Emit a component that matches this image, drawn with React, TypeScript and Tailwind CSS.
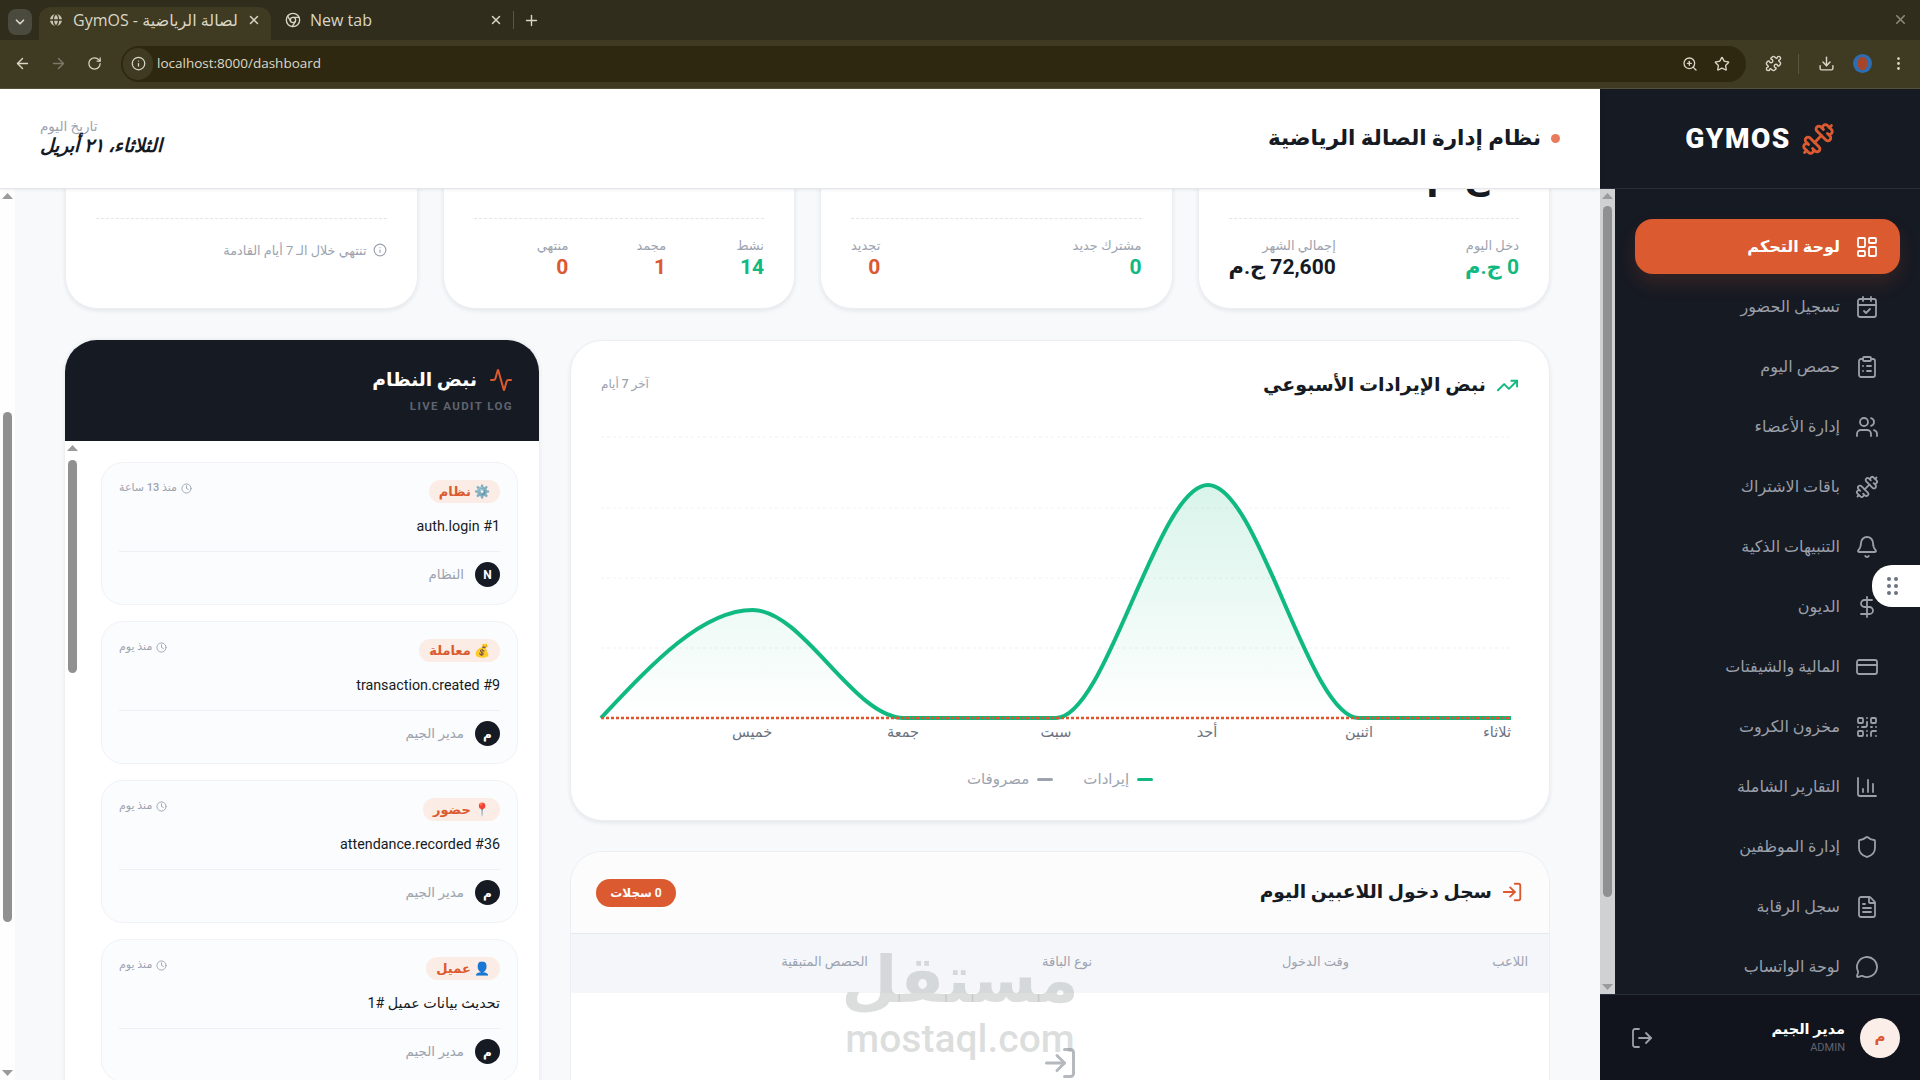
import {
  Activity,
  ArrowLeft,
  ArrowRight,
  Bell,
  CalendarCheck,
  ChartColumn,
  ChevronDown,
  Chrome,
  ClipboardList,
  Clock,
  CreditCard,
  DollarSign,
  Download,
  Dumbbell,
  EllipsisVertical,
  FileText,
  Globe,
  Info,
  LayoutDashboard,
  LogIn,
  LogOut,
  MessageCircle,
  Plus,
  Puzzle,
  QrCode,
  RotateCw,
  Shield,
  Star,
  TrendingUp,
  Users,
  X,
  ZoomIn,
} from 'lucide-react'
import clsx from 'clsx'

const NAV = [
  { label: 'لوحة التحكم', icon: LayoutDashboard, active: true },
  { label: 'تسجيل الحضور', icon: CalendarCheck },
  { label: 'حصص اليوم', icon: ClipboardList },
  { label: 'إدارة الأعضاء', icon: Users },
  { label: 'باقات الاشتراك', icon: Dumbbell },
  { label: 'التنبيهات الذكية', icon: Bell },
  { label: 'الديون', icon: DollarSign },
  { label: 'المالية والشيفتات', icon: CreditCard },
  { label: 'مخزون الكروت', icon: QrCode },
  { label: 'التقارير الشاملة', icon: ChartColumn },
  { label: 'إدارة الموظفين', icon: Shield },
  { label: 'سجل الرقابة', icon: FileText },
  { label: 'لوحة الواتساب', icon: MessageCircle },
]

const LOGS = [
  { tag: '⚙️ نظام', time: 'منذ 13 ساعة', text: 'auth.login #1', who: 'النظام', initial: 'N' },
  { tag: '💰 معاملة', time: 'منذ يوم', text: 'transaction.created #9', who: 'مدير الجيم', initial: 'م' },
  { tag: '📍 حضور', time: 'منذ يوم', text: 'attendance.recorded #36', who: 'مدير الجيم', initial: 'م' },
  { tag: '👤 عميل', time: 'منذ يوم', text: 'تحديث بيانات عميل #1', who: 'مدير الجيم', initial: 'م' },
]

const DAYS = [
  { label: 'خميس', x: 153 },
  { label: 'جمعة', x: 304 },
  { label: 'سبت', x: 457 },
  { label: 'أحد', x: 608 },
  { label: 'اثنين', x: 760 },
  { label: 'ثلاثاء', x: 898 },
]

function FakeScrollbar({ thumbTop, thumbHeight, className }: { thumbTop: number; thumbHeight: number; className?: string }) {
  return (
    <div className={clsx('relative w-[15px] shrink-0 bg-white/80', className)}>
      <svg className="absolute left-[2px] top-[4px]" width="11" height="6" viewBox="0 0 11 6">
        <polygon points="5.5,0 11,6 0,6" fill="#9b9b9b" />
      </svg>
      <div
        className="absolute left-[3px] w-[9px] rounded-full bg-[#8f908f]"
        style={{ top: thumbTop, height: thumbHeight }}
      />
      <svg className="absolute bottom-[4px] left-[2px]" width="11" height="6" viewBox="0 0 11 6">
        <polygon points="0,0 11,0 5.5,6" fill="#9b9b9b" />
      </svg>
    </div>
  )
}

function BrowserChrome() {
  return (
    <div dir="ltr" className="h-[89px] shrink-0 bg-[#302d1c] font-['Open_Sans',sans-serif] text-[#d9d6c6]">
      <div className="flex h-[40px] items-end">
        <div className="mb-[5px] ml-[8px] flex h-[26px] w-[24px] items-center justify-center rounded-lg bg-[#4a4a3f]">
          <ChevronDown size={14} strokeWidth={3} />
        </div>
        <div className="ml-[7px] flex h-[33px] w-[232px] items-center rounded-t-xl bg-[#3f3a22] pb-[7px] pl-[9px] pr-[10px] text-[16px]">
          <Globe size={16} className="shrink-0 fill-[#c8c5b4] text-[#3f3a22]" />
          <span className="ml-[9px] w-[165px] overflow-hidden whitespace-nowrap font-['Open_Sans','DejaVu_Sans',sans-serif]">
            GymOS - الصالة الرياضية
          </span>
          <X size={14} className="ml-auto" strokeWidth={2.5} />
        </div>
        <div className="ml-[10px] flex h-[33px] w-[232px] items-center pb-[7px] pl-[4px] pr-[10px] text-[16px]">
          <Chrome size={16} className="shrink-0" />
          <span className="ml-[9px]">New tab</span>
          <X size={14} className="ml-auto" strokeWidth={2.5} />
        </div>
        <div className="mb-[11px] h-[18px] w-px bg-[#5a5642]" />
        <Plus size={17} className="mb-[11px] ml-[9px]" />
        <X size={15} className="mb-[13px] ml-auto mr-[12px] text-[#8d8a7c]" strokeWidth={2.5} />
      </div>
      <div className="flex h-[49px] items-center border-b border-[#55503a] bg-[#3f3a22] pb-[1px]">
        <ArrowLeft size={17} className="ml-[14px]" />
        <ArrowRight size={17} className="ml-[19px] text-[#7d7868]" />
        <RotateCw size={15} className="ml-[20px]" />
        <div className="ml-[19px] flex h-[36px] w-[1625px] items-center rounded-full bg-[#2e2810] pr-[16px]">
          <div className="ml-[2px] flex h-[32px] w-[30px] items-center justify-center rounded-full bg-[#3f3a22]">
            <Info size={15} />
          </div>
          <span className="ml-[4px] text-[13.5px] text-[#dcd9c9]">localhost:8000/dashboard</span>
          <ZoomIn size={16} className="ml-auto" />
          <Star size={16} className="ml-[16px]" />
        </div>
        <Puzzle size={17} className="ml-[19px]" />
        <div className="ml-[16px] h-[20px] w-px bg-[#5a5642]" />
        <Download size={17} className="ml-[19px]" />
        <div className="ml-[18px] flex h-[19px] w-[19px] items-center justify-center rounded-full bg-[#2e6db0]">
          <div className="h-[13px] w-[9px] rounded-full bg-[#a8442a]" />
        </div>
        <EllipsisVertical size={17} className="ml-[18px]" />
      </div>
    </div>
  )
}

function Sidebar() {
  return (
    <aside className="flex w-[320px] shrink-0 flex-col bg-[#161a23]">
      <div className="flex h-[100px] shrink-0 items-center justify-center gap-[10px] border-b border-[#2a2e3a]">
        <Dumbbell size={34} className="text-[#db5a2f]" />
        <span dir="ltr" className="text-[28px] font-black tracking-[1.5px] text-white">
          GYMOS
        </span>
      </div>
      <div className="flex min-h-0 flex-1">
        <nav className="flex flex-1 flex-col gap-[5px] px-[20px] pt-[30px]">
          {NAV.map((item) => (
            <div
              key={item.label}
              className={clsx(
                'flex h-[55px] shrink-0 items-center gap-[15px] rounded-[18px] pr-[21px] text-[16px]',
                item.active
                  ? 'bg-[#db5a2f] font-bold text-white shadow-[0_10px_18px_rgba(219,90,47,0.15)]'
                  : 'text-[#9a9fa9]',
              )}
            >
              <item.icon size={24} strokeWidth={1.8} className="shrink-0" />
              <span>{item.label}</span>
            </div>
          ))}
        </nav>
        <FakeScrollbar thumbTop={17} thumbHeight={691} className="order-last" />
      </div>
      <div className="flex h-[86px] shrink-0 items-center border-t border-[#2a2e3a] bg-[#11141c] pl-[30px] pr-[20px]">
        <div className="flex h-[40px] w-[40px] items-center justify-center rounded-full bg-[#fbeee9] text-[15px] font-bold text-[#db5a2f]">
          م
        </div>
        <div className="mr-[15px] flex flex-col">
          <span className="text-[14.5px] font-bold leading-[20px] text-white">مدير الجيم</span>
          <span className="text-[11px] leading-[16px] text-[#5f6470]">ADMIN</span>
        </div>
        <LogOut size={24} strokeWidth={1.8} className="mr-auto text-[#9a9fa9]" />
      </div>
    </aside>
  )
}

function StatCard({ value, children }: { value: React.ReactNode; children: React.ReactNode }) {
  return (
    <div className="flex h-[249px] flex-col justify-end rounded-[32px] border border-[#eceef3] bg-white px-[30px] pb-[28px] shadow-[0_2px_4px_rgba(20,25,40,0.08)]">
      {value}
      <div className="mb-[19px] border-t border-dashed border-[#e3e5ea]" />
      {children}
    </div>
  )
}

function BigValue({ children }: { children: React.ReactNode }) {
  return <div className="mb-[22px] text-[36px] font-bold leading-[40px] text-[#161a23]">{children}</div>
}

function StatCol({ label, value, color }: { label: string; value: string; color: string }) {
  return (
    <div>
      <div className="text-[13px] leading-[16px] text-[#9ca3af]">{label}</div>
      <div className={clsx('text-[21px] font-bold leading-[26px]', color)}>{value}</div>
    </div>
  )
}

function StatCards() {
  return (
    <div className="-mt-[129px] mb-[31px] grid grid-cols-4 gap-[25px]">
      <StatCard value={<BigValue>0 ج.م</BigValue>}>
        <div className="flex justify-between">
          <StatCol label="دخل اليوم" value="0 ج.م" color="text-[#10b981]" />
          <StatCol label="إجمالي الشهر" value="72,600 ج.م" color="text-[#161a23]" />
        </div>
      </StatCard>
      <StatCard
        value={
          <BigValue>
            0 <span className="text-[18px] text-[#9ca3af]">جديد</span>
          </BigValue>
        }
      >
        <div className="flex justify-between">
          <StatCol label="مشترك جديد" value="0" color="text-[#10b981]" />
          <StatCol label="تجديد" value="0" color="text-[#db5a2f]" />
        </div>
      </StatCard>
      <StatCard value={<BigValue>14</BigValue>}>
        <div className="grid grid-cols-3 gap-[3px]">
          <StatCol label="نشط" value="14" color="text-[#10b981]" />
          <StatCol label="مجمد" value="1" color="text-[#db5a2f]" />
          <StatCol label="منتهي" value="0" color="text-[#db5a2f]" />
        </div>
      </StatCard>
      <StatCard value={<BigValue>0</BigValue>}>
        <div className="flex h-[42px] items-start gap-[6px] pt-[3px] text-[12.8px] text-[#9ca3af]">
          <Info size={14} className="mt-[2px] shrink-0" />
          <span>تنتهي خلال الـ 7 أيام القادمة</span>
        </div>
      </StatCard>
    </div>
  )
}

function RevenueChart() {
  const line =
    'M2 297 C52.6 243 103 189 153.7 189 C204.3 189 254.6 297 305 297 L457 297 C507.5 297 558.5 64 609 64 C659.5 64 709.7 297 760 297 L912 297'
  return (
    <svg width="920" height="330" className="block">
      <defs>
        <linearGradient id="rev" x1="0" y1="0" x2="0" y2="1">
          <stop offset="0%" stopColor="#10b981" stopOpacity="0.16" />
          <stop offset="100%" stopColor="#10b981" stopOpacity="0" />
        </linearGradient>
      </defs>
      {[16, 87, 157, 227].map((y) => (
        <line key={y} x1="2" x2="912" y1={y} y2={y} stroke="#eff1f4" strokeDasharray="3 3" />
      ))}
      <path d={`${line} V297 H2 Z`} fill="url(#rev)" />
      <path d={line} fill="none" stroke="#10b981" strokeWidth="4" />
      <line x1="2" x2="912" y1="297" y2="297" stroke="#e0532b" strokeWidth="2.5" strokeDasharray="3 2" />
      {DAYS.map((d) => (
        <text key={d.label} x={d.x} y="316" textAnchor="middle" fontSize="14.5" fill="#6b7280">
          {d.label}
        </text>
      ))}
    </svg>
  )
}

function ChartCard() {
  return (
    <section className="h-[481px] rounded-[32px] border border-[#eceef3] bg-white px-[30px] pt-[30px] shadow-[0_2px_4px_rgba(20,25,40,0.08)]">
      <div className="flex h-[50px] items-start justify-between">
        <div className="flex items-center gap-[10px]">
          <TrendingUp size={23} className="text-[#10b981]" />
          <h2 className="text-[19px] font-bold leading-[28px] text-[#161a23]">نبض الإيرادات الأسبوعي</h2>
        </div>
        <span className="mt-[4px] text-[12px] font-medium text-[#9ca3af]">آخر 7 أيام</span>
      </div>
      <RevenueChart />
      <div className="mt-[17px] flex justify-center gap-[30px] text-[15px] text-[#9ca3af]">
        <span className="flex items-center gap-[8px]">
          <span className="h-[3px] w-[16px] rounded-full bg-[#10b981]" />
          إيرادات
        </span>
        <span className="flex items-center gap-[8px]">
          <span className="h-[3px] w-[16px] rounded-full bg-[#9ca3af]" />
          مصروفات
        </span>
      </div>
    </section>
  )
}

function AttendanceTable() {
  return (
    <section className="rounded-t-[32px] border border-[#eceef3] bg-white">
      <div className="flex h-[81px] items-center justify-between rounded-t-[32px] bg-[#fcfcfd] pl-[25px] pr-[26px]">
        <div className="flex items-center gap-[9px]">
          <LogIn size={22} className="text-[#db5a2f]" />
          <h2 className="text-[18.7px] font-bold text-[#161a23]">سجل دخول اللاعبين اليوم</h2>
        </div>
        <span className="flex h-[28px] w-[80px] items-center justify-center rounded-full bg-[#db5a2f] text-[12px] font-bold text-white">
          0 سجلات
        </span>
      </div>
      <div className="flex h-[60px] items-center border-t border-[#e6e8f0] bg-[#f5f6fa] px-[21px] pb-[3px] text-[13px] font-medium text-[#9ca3af]">
        <div className="w-[179px]">اللاعب</div>
        <div className="w-[257px]">وقت الدخول</div>
        <div className="w-[224px]">نوع الباقة</div>
        <div>الحصص المتبقية</div>
      </div>
      <div className="flex justify-center pb-[40px] pt-[52px]">
        <LogIn size={36} className="text-[#b5b8bd]" />
      </div>
    </section>
  )
}

function LogCard({ log }: { log: (typeof LOGS)[number] }) {
  return (
    <div className="flex h-[143px] shrink-0 flex-col rounded-[22px] border border-[#f0f2f6] bg-[#fbfcfd] px-[17px] pt-[17px]">
      <div className="flex items-start justify-between">
        <span className="flex h-[23px] items-center rounded-full bg-[#fbece6] px-[10px] text-[13px] font-bold text-[#db5a2f]">
          {log.tag}
        </span>
        <span className="flex items-center gap-[4px] text-[11px] font-medium text-[#9ca3af]">
          <Clock size={11} />
          {log.time}
        </span>
      </div>
      <div className="mt-[12px] text-[14.3px] leading-[22px] text-[#161a23]">{log.text}</div>
      <div className="mt-[14px] flex items-center gap-[11px] border-t border-[#eef0f4] pt-[10px]">
        <span className="flex h-[25px] w-[25px] items-center justify-center rounded-full bg-[#161a23] text-[12px] font-bold text-white">
          {log.initial}
        </span>
        <span className="text-[13.5px] font-medium text-[#9ca3af]">{log.who}</span>
      </div>
    </div>
  )
}

function AuditPanel() {
  return (
    <aside className="w-[474px] shrink-0 rounded-t-[32px] bg-white shadow-[0_0_4px_rgba(20,25,40,0.1)]">
      <div className="h-[101px] rounded-t-[32px] bg-[#161a23] px-[26px] pt-[27px]">
        <div className="flex items-center gap-[12px]">
          <Activity size={24} className="text-[#db5a2f]" />
          <h2 className="text-[18.7px] font-bold leading-[26px] text-white">نبض النظام</h2>
        </div>
        <div dir="ltr" className="mt-[5px] text-right text-[11.5px] font-bold tracking-[1.4px] text-[#5f6470]">
          LIVE AUDIT LOG
        </div>
      </div>
      <div className="flex">
        <div className="flex flex-1 flex-col gap-[16px] pb-[20px] pl-[21px] pr-[21px] pt-[21px]">
          {LOGS.map((log) => (
            <LogCard key={log.text} log={log} />
          ))}
        </div>
        <FakeScrollbar thumbTop={19} thumbHeight={213} className="order-last" />
      </div>
    </aside>
  )
}

export default function App() {
  return (
    <div className="relative flex h-[1080px] w-[1920px] flex-col overflow-hidden bg-[#f8f9fb] font-['Roboto','DejaVu_Sans',sans-serif]">
      <BrowserChrome />
      <div dir="rtl" className="flex min-h-0 flex-1">
        <Sidebar />
        <main className="flex min-w-0 flex-1 flex-col">
          <header className="relative z-10 flex h-[100px] shrink-0 items-center justify-between border-b border-[#e4e6ee] bg-white pl-[40px] pr-[40px] shadow-[0_1px_3px_rgba(20,25,40,0.08)]">
            <div className="flex items-center gap-[10px]">
              <span className="h-[9px] w-[9px] rounded-full bg-[#ea7a5c]" />
              <h1 className="text-[21.5px] font-bold text-[#161a23]">نظام إدارة الصالة الرياضية</h1>
            </div>
            <div className="-mt-[2px] text-left">
              <div className="text-[13.5px] leading-[16px] text-[#9ca3af]">تاريخ اليوم</div>
              <div className="text-[19px] font-bold italic leading-[24px] text-[#161a23]">الثلاثاء، ٢١ أبريل</div>
            </div>
          </header>
          <div className="flex min-h-0 flex-1 overflow-hidden">
            <div className="min-w-0 flex-1 px-[50px]">
              <StatCards />
              <div className="flex gap-[31px]">
                <div className="flex min-w-0 flex-1 flex-col gap-[30px]">
                  <ChartCard />
                  <AttendanceTable />
                </div>
                <AuditPanel />
              </div>
            </div>
            <FakeScrollbar thumbTop={223} thumbHeight={510} />
          </div>
        </main>
      </div>

      {/* floating drag handle */}
      <div className="absolute right-0 top-[565px] flex h-[42px] w-[48px] items-center rounded-l-[20px] bg-white pl-[15px]">
        <div className="grid grid-cols-2 gap-x-[3px] gap-y-[3px]">
          {[0, 1, 2, 3, 4, 5].map((i) => (
            <span key={i} className="h-[4px] w-[4px] rounded-full bg-[#6b7280]" />
          ))}
        </div>
      </div>

      {/* mostaql watermark */}
      <div className="pointer-events-none absolute left-[845px] top-[941px] flex w-[230px] flex-col items-center text-[#9aa0a0]/35">
        <span className="text-[65px] font-bold leading-[78px]">مستقل</span>
        <span className="text-[39px] font-medium leading-[40px]">mostaql.com</span>
      </div>
    </div>
  )
}
